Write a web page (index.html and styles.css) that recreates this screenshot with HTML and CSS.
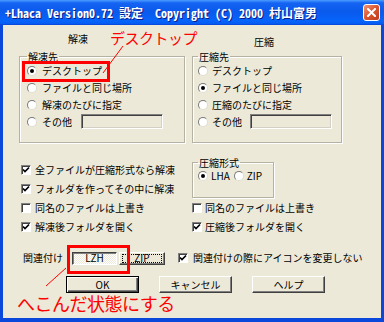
FILE: index.html
```html
<!DOCTYPE html>
<html lang="ja">
<head>
    <meta charset="UTF-8">
    <title>Lhaca 設定</title>
    <link rel="stylesheet" href="styles.css">
</head>
<body>
    <div class="window">
        <div class="titlebar">
            <span class="title">+Lhaca Version0.72 設定  Copyright (C) 2000 村山富男</span>
            <span class="close">
                <svg width="9" height="9" viewBox="0 0 9 9"><path d="M1 1L8 8M8 1L1 8" stroke="#fff" stroke-width="2" stroke-linecap="square"/></svg>
            </span>
        </div>
        <div class="client">
            <div class="heads">
                <span class="head-left">解凍</span>
                <span class="head-right">圧縮</span>
            </div>
            <div class="cols">
                <!-- 解凍先 -->
                <fieldset class="group dest dest-left">
                    <legend>解凍先</legend>
                    <div class="opt"><span class="radio on"></span>デスクトップ</div>
                    <div class="opt"><span class="radio"></span>ファイルと同じ場所</div>
                    <div class="opt"><span class="radio"></span>解凍のたびに指定</div>
                    <div class="opt"><span class="radio"></span>その他<span class="field"></span></div>
                </fieldset>
                <!-- 圧縮先 -->
                <fieldset class="group dest dest-right">
                    <legend>圧縮先</legend>
                    <div class="opt"><span class="radio"></span>デスクトップ</div>
                    <div class="opt"><span class="radio on"></span>ファイルと同じ場所</div>
                    <div class="opt"><span class="radio"></span>圧縮のたびに指定</div>
                    <div class="opt"><span class="radio"></span>その他<span class="field"></span></div>
                </fieldset>

                <div class="checks">
                    <div class="check-row"><span class="check on"></span>全ファイルが圧縮形式なら解凍</div>
                    <div class="check-row"><span class="check on"></span>フォルダを作ってその中に解凍</div>
                </div>
                <fieldset class="group format">
                    <legend>圧縮形式</legend>
                    <div class="inline">
                        <span class="opt-inline"><span class="radio on"></span>LHA</span>
                        <span class="opt-inline"><span class="radio"></span>ZIP</span>
                    </div>
                </fieldset>

                <div class="check-row left"><span class="check"></span>同名のファイルは上書き</div>
                <div class="check-row right"><span class="check"></span>同名のファイルは上書き</div>
                <div class="check-row left"><span class="check on"></span>解凍後フォルダを開く</div>
                <div class="check-row right"><span class="check on"></span>圧縮後フォルダを開く</div>
            </div>

            <div class="assoc">
                <span>関連付け</span>
                <span class="toggle down">LZH</span>
                <span class="toggle"><span class="focus">ZIP</span></span>
                <div class="check-row assoc-check"><span class="check on"></span>関連付けの際にアイコンを変更しない</div>
            </div>

            <div class="buttons">
                <span class="btn default">OK</span>
                <span class="btn">キャンセル</span>
                <span class="btn">ヘルプ</span>
            </div>
        </div>

        <!-- red notes drawn over the dialog -->
        <div class="note note-top">デスクトップ</div>
        <div class="note note-bottom">へこんだ状態にする</div>
        <div class="mark mark-top"></div>
        <div class="mark mark-bottom"></div>
        <svg class="leaders" width="384" height="322" viewBox="0 0 384 322">
            <line x1="123" y1="46" x2="103" y2="73" stroke="#f00" stroke-width="1"/>
            <line x1="66" y1="268" x2="46" y2="286" stroke="#f00" stroke-width="1"/>
        </svg>
    </div>
</body>
</html>
```

FILE: styles.css
```css
body {
    margin: 0;
    background: #fff;
}
.window {
    position: relative;
    width: 384px;
    height: 322px;
    display: flex;
    flex-direction: column;
    font-family: "Noto Sans CJK JP", sans-serif;
    font-size: 10px;
    color: #000;
}

/* Title bar */
.titlebar {
    box-sizing: border-box;
    height: 25px;
    padding: 0 4px 0 5px;
    display: flex;
    align-items: center;
    justify-content: space-between;
    background: linear-gradient(to bottom, #4a9cff 0, #1563f2 12%, #0a5aec 45%, #0664fa 85%, #055cf2 94%, #0a42d4 100%);
}
.title {
    color: #fff;
    font-family: "Noto Sans Mono CJK JP", "DejaVu Sans Mono", monospace;
    font-weight: bold;
    font-size: 12px;
    white-space: pre;
    text-shadow: 1px 1px 0 #0a1c8a;
}
.close {
    box-sizing: border-box;
    width: 17px;
    height: 17px;
    border: 1px solid #fff;
    border-radius: 3px;
    background: linear-gradient(135deg, #f29475 0, #d9552f 50%, #bd3c1a 100%);
    display: flex;
    align-items: center;
    justify-content: center;
}

/* Client area */
.client {
    flex: 1;
    background: #ece9d8;
    border: solid #0a48dc;
    border-width: 0 3px 4px;
}
.heads {
    display: flex;
    height: 18px;
    margin-top: 8px;
    line-height: 12px;
}
.head-left {
    margin-left: 65px;
}
.head-right {
    margin-left: 166px;
    margin-top: 3px;
}
.cols {
    display: grid;
    grid-template-columns: 166px 150px;
    column-gap: 7px;
    row-gap: 1px;
    margin-left: 16px;
}

/* Group boxes */
.group {
    margin: 0;
    min-width: 0;
    border: 1px solid #b5b2a3;
    box-shadow: inset 1px 1px 0 #fff, 1px 1px 0 #fff;
}
.group legend {
    padding: 0 1px;
    line-height: 11px;
}
.dest {
    padding: 0 0 12px 7px;
}
.dest-right {
    padding-left: 5px;
}
.opt {
    height: 17px;
    display: flex;
    align-items: center;
    gap: 5px;
    line-height: 12px;
}
.dest-right .opt {
    gap: 4px;
}
.field {
    box-sizing: border-box;
    width: 82px;
    height: 15px;
    margin-left: 4px;
    border: 1px solid;
    border-color: #808080 #fff #fff #808080;
    box-shadow: inset 1px 1px 0 #404040, inset -1px -1px 0 #d4d0c8;
}
.format {
    justify-self: start;
    box-sizing: border-box;
    width: 82px;
    margin-top: 13px;
    padding: 1px 0 3px 5px;
}
.inline {
    display: flex;
    align-items: center;
    height: 14px;
    gap: 4px;
}
.opt-inline {
    display: flex;
    align-items: center;
    gap: 3px;
    line-height: 12px;
}

/* Radios and checkboxes */
.radio {
    box-sizing: border-box;
    width: 10px;
    height: 10px;
    flex: none;
    border-radius: 50%;
    background: #fff;
    border: 1px solid;
    border-color: #7a7a7a #e0ddd0 #e0ddd0 #7a7a7a;
    display: flex;
    align-items: center;
    justify-content: center;
}
.radio.on::after {
    content: "";
    width: 4px;
    height: 4px;
    border-radius: 50%;
    background: #000;
}
.check {
    box-sizing: border-box;
    width: 10px;
    height: 10px;
    flex: none;
    background: #fff;
    border: 1px solid;
    border-color: #808080 #fff #fff #808080;
    box-shadow: inset 1px 1px 0 #404040;
}
.check.on {
    background: #fff url("data:image/svg+xml;utf8,<svg xmlns='http://www.w3.org/2000/svg' width='8' height='8' viewBox='0 0 8 8'><path d='M1 3.5L3 5.5L7 1.5' fill='none' stroke='black' stroke-width='1.7'/></svg>") 0 0 / 8px 8px no-repeat;
}
.checks {
    display: flex;
    flex-direction: column;
    gap: 1px;
    margin-top: 17px;
    padding-left: 2px;
}
.check-row {
    height: 18px;
    display: flex;
    align-items: center;
    gap: 4px;
    line-height: 12px;
}
.check-row.left {
    padding-left: 2px;
}
.check-row.right {
    gap: 3px;
}

/* 関連付け row */
.assoc {
    display: flex;
    align-items: center;
    height: 14px;
    margin-top: 15px;
    padding-left: 20px;
    line-height: 12px;
}
.toggle {
    box-sizing: border-box;
    width: 46px;
    height: 13px;
    margin-left: 2px;
    display: flex;
    align-items: center;
    justify-content: center;
    background: #ece9d8;
    border: 1px solid;
    border-color: #fff #404040 #404040 #fff;
    box-shadow: inset -1px -1px 0 #808080;
}
.toggle.down {
    width: 45px;
    margin-left: 9px;
    border-color: #404040 #fff #fff #404040;
    box-shadow: inset 1px 1px 0 #808080;
    background: repeating-conic-gradient(#fff 0 25%, #ece9d8 0 50%) 0 0 / 2px 2px;
}
.focus {
    box-sizing: border-box;
    width: 40px;
    height: 9px;
    border: 1px dotted #000;
    display: flex;
    align-items: center;
    justify-content: center;
}
.assoc-check {
    margin-left: 13px;
    gap: 5px;
}

/* Buttons */
.buttons {
    display: flex;
    gap: 20px;
    margin-top: 11px;
    padding-left: 63px;
}
.btn {
    box-sizing: border-box;
    width: 73px;
    height: 17px;
    display: flex;
    align-items: center;
    justify-content: center;
    line-height: 12px;
    background: #ece9d8;
    border: 1px solid;
    border-color: #fff #404040 #404040 #fff;
    box-shadow: inset -1px -1px 0 #808080;
}
.btn.default {
    border-color: #000;
    box-shadow: inset 1px 1px 0 #fff, inset -1px -1px 0 #404040, inset -2px -2px 0 #808080;
}

/* Red annotations */
.note {
    position: absolute;
    color: #f00;
    line-height: 1;
    white-space: nowrap;
}
.note-top {
    left: 110px;
    top: 30px;
    font-size: 15px;
    letter-spacing: -0.5px;
}
.note-bottom {
    left: 17px;
    top: 294px;
    font-size: 18px;
    letter-spacing: -0.5px;
}
.mark {
    position: absolute;
    box-sizing: border-box;
    border: 3px solid #f00;
}
.mark-top {
    left: 22px;
    top: 61px;
    width: 88px;
    height: 21px;
}
.mark-bottom {
    left: 67px;
    top: 245px;
    width: 63px;
    height: 29px;
}
.leaders {
    position: absolute;
    left: 0;
    top: 0;
}
```
